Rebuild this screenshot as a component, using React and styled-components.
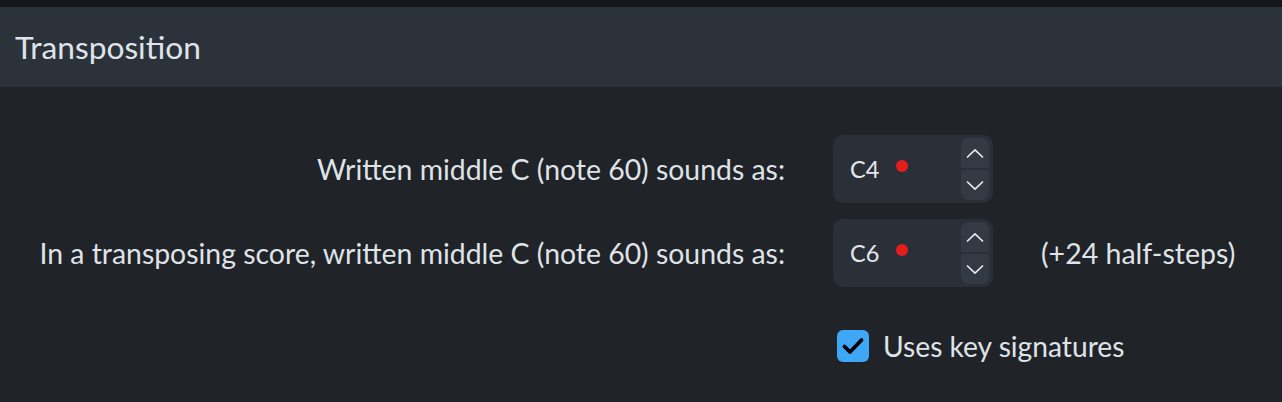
import React from "react";
import styled, { createGlobalStyle } from "styled-components";

const Global = createGlobalStyle`
  html, body { margin: 0; padding: 0; background: #202327; }
  body { font-family: Lato, "Open Sans", sans-serif; color: #dfe3e8; }
`;

const Page = styled.div`
  width: 1282px;
  height: 402px;
  background: #202327;
  display: flex;
  flex-direction: column;
`;

const TopStrip = styled.div`
  height: 7px;
  background: #141619;
`;

const Header = styled.div`
  height: 80px;
  background: #2c323a;
  display: flex;
  align-items: center;
  padding-left: 15px;
  font-size: 31.7px;
  color: #dfe4ea;
`;

const Body = styled.div`
  display: grid;
  grid-template-columns: 785px 160px auto;
  column-gap: 48px;
  row-gap: 16px;
  padding-top: 48px;
  align-items: center;
`;

const Label = styled.div`
  text-align: right;
  font-size: 28.4px;
  color: #dfe3e8;
`;

const Spin = styled.div`
  height: 68px;
  width: 160px;
  box-sizing: border-box;
  background: #2b3038;
  border-radius: 10px;
  display: flex;
  align-items: center;
  padding: 4px 4px 4px 17px;
`;

const SpinValue = styled.div`
  flex: 1;
  display: flex;
  align-items: center;
  font-size: 23.5px;
  color: #e3e7ec;
  gap: 17px;
`;

const Dot = styled.span`
  width: 12px;
  height: 12px;
  border-radius: 50%;
  background: #e81c1c;
  margin-top: -7px;
`;

const Buttons = styled.div`
  display: flex;
  flex-direction: column;
  gap: 2px;
`;

const StepBtn = styled.div`
  width: 28px;
  height: 30px;
  background: #343a43;
  border-radius: ${(p) => (p.$up ? "8px 8px 0 0" : "0 0 8px 8px")};
  display: flex;
  align-items: center;
  justify-content: center;
`;

const Note = styled.div`
  font-size: 28.5px;
  color: #dfe3e8;
`;

const CheckRow = styled.label`
  grid-column: 2 / 4;
  display: flex;
  align-items: center;
  gap: 14px;
  margin-top: 26px;
  margin-left: 4px;
  font-size: 28.2px;
  color: #dfe3e8;
`;

const Box = styled.span`
  width: 32px;
  height: 32px;
  border-radius: 6px;
  background: #3ea8f6;
  display: flex;
  align-items: center;
  justify-content: center;
`;

const Chevron = ({ up }) => (
  <svg width="18" height="11" viewBox="0 0 18 11">
    <path
      d={up ? "M1.5 9 L9 1.8 L16.5 9" : "M1.5 2 L9 9.2 L16.5 2"}
      fill="none"
      stroke="#e6eaee"
      strokeWidth="1.7"
      strokeLinecap="round"
      strokeLinejoin="round"
    />
  </svg>
);

const SpinBox = ({ value }) => (
  <Spin>
    <SpinValue>
      {value}
      <Dot />
    </SpinValue>
    <Buttons>
      <StepBtn $up>
        <Chevron up />
      </StepBtn>
      <StepBtn>
        <Chevron />
      </StepBtn>
    </Buttons>
  </Spin>
);

export default function App() {
  return (
    <>
      <Global />
      <Page>
        <TopStrip />
        <Header>Transposition</Header>
        <Body>
          <Label>Written middle C (note 60) sounds as:</Label>
          <SpinBox value="C4" />
          <div />
          <Label>In a transposing score, written middle C (note 60) sounds as:</Label>
          <SpinBox value="C6" />
          <Note>(+24 half-steps)</Note>
          <div />
          <CheckRow>
            <Box>
              <svg width="24" height="20" viewBox="0 0 24 20">
                <path d="M3.5 10.5 L9 16 L20.5 4" fill="none" stroke="#000" strokeWidth="3.8" strokeLinecap="round" strokeLinejoin="round" />
              </svg>
            </Box>
            Uses key signatures
          </CheckRow>
        </Body>
      </Page>
    </>
  );
}
